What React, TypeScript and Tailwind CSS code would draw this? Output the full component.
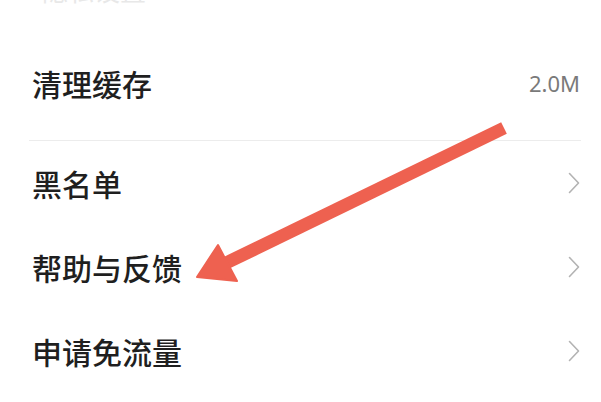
const cjk = { fontFamily: '"Noto Sans CJK SC", "Noto Sans", sans-serif' };

function Chevron() {
  return (
    <svg width="12" height="22" viewBox="0 0 12 22" fill="none" className="shrink-0">
      <path d="M1.5 1.5 L10.5 11 L1.5 20.5" stroke="#b3b3b3" strokeWidth="1.6" strokeLinecap="round" strokeLinejoin="round" />
    </svg>
  );
}

function Row({ label, right }: { label: string; right?: React.ReactNode }) {
  return (
    <div className="h-[84px] flex items-center justify-between">
      <span className="text-[30px] leading-none font-medium text-[#1f1f1f]" style={cjk}>{label}</span>
      {right}
    </div>
  );
}

export default function App() {
  return (
    <main className="relative w-[601px] h-[402px] overflow-hidden bg-white">
      {/* cut-off row above */}
      <div className="pl-[42px] -mt-[25px] h-[28px] flex items-end">
        <span className="text-[26px] leading-none text-[#e8e8e8]" style={cjk}>隐私设置</span>
      </div>

      <div className="pl-[32px] pr-[21px] pt-[38px]">
        <Row
          label="清理缓存"
          right={<span className="text-[22px] text-[#7a7a7a]" style={{ fontFamily: '"Noto Sans", sans-serif' }}>2.0M</span>}
        />
      </div>

      <div className="mt-[15px] ml-[29px] mr-[20px] h-px bg-[#ececec]" />

      <div className="pl-[32px] pr-[21px]">
        <Row label="黑名单" right={<Chevron />} />
        <Row label="帮助与反馈" right={<Chevron />} />
        <Row label="申请免流量" right={<Chevron />} />
      </div>

      {/* annotation arrow */}
      <svg className="absolute inset-0 pointer-events-none" width="601" height="402" viewBox="0 0 601 402">
        <line x1="504" y1="128" x2="224" y2="264" stroke="#ee6150" strokeWidth="13" strokeLinecap="butt" />
        <polygon points="197,277 218,245 237,281" fill="#ee6150" strokeLinejoin="round" stroke="#ee6150" strokeWidth="2" />
      </svg>
    </main>
  );
}
